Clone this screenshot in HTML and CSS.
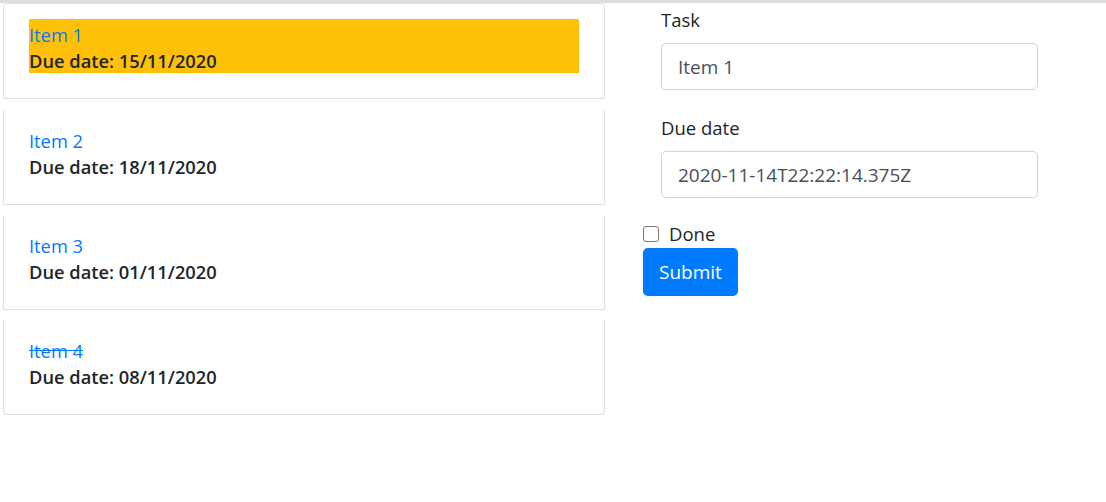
FILE: index.html
```html
<!DOCTYPE html>
<html lang="en">
<head>
<meta charset="utf-8">
<title>Todo</title>
<link rel="stylesheet" href="styles.css">
</head>
<body>
<div class="topbar"></div>
<div class="page">
  <ul class="list">
    <li class="item">
      <div class="item-body selected">
        <div class="title">Item 1</div>
        <div class="due">Due date: 15/11/2020</div>
      </div>
    </li>
    <li class="item">
      <div class="item-body">
        <div class="title">Item 2</div>
        <div class="due">Due date: 18/11/2020</div>
      </div>
    </li>
    <li class="item">
      <div class="item-body">
        <div class="title">Item 3</div>
        <div class="due">Due date: 01/11/2020</div>
      </div>
    </li>
    <li class="item">
      <div class="item-body">
        <div class="title done">Item 4</div>
        <div class="due">Due date: 08/11/2020</div>
      </div>
    </li>
  </ul>
  <form class="form">
    <div class="group">
      <label class="label" for="task">Task</label>
      <input class="field" id="task" type="text" value="Item 1">
    </div>
    <div class="group">
      <label class="label" for="due">Due date</label>
      <input class="field" id="due" type="text" value="2020-11-14T22:22:14.375Z">
    </div>
    <label class="check">
      <input class="checkbox" type="checkbox">
      <span>Done</span>
    </label>
    <button class="btn" type="button">Submit</button>
  </form>
</div>
</body>
</html>
```
FILE: styles.css
```css
html, body {
  margin: 0;
  padding: 0;
  background: #fff;
}
body {
  font-family: "Open Sans", "Noto Sans", sans-serif;
  font-size: 18.5px;
  line-height: 27px;
  color: #212529;
}
.topbar {
  height: 3px;
  background: #dedee2;
}
.page {
  display: flex;
  align-items: flex-start;
  padding-left: 3px;
}
.list {
  list-style: none;
  margin: 0;
  padding: 0;
  width: 602px;
  display: flex;
  flex-direction: column;
}
.item {
  border: 1px solid #dfdfdf;
  padding: 15px 25px 25px;
  margin-bottom: 10px;
  background: #fff;
}
.item + .item {
  border-top: 0;
}
.item:first-child {
  border-radius: 4px 4px 0 0;
  margin-bottom: 11px;
}
.item:last-child {
  border-radius: 0 0 4px 4px;
}
.item-body {
  padding: 1px 0 0;
  font-size: 18.3px;
}
.item-body.selected {
  background: #ffc107;
}
.title {
  color: #007bff;
  line-height: 29px;
}
.title.done {
  text-decoration: line-through;
}
.due {
  font-weight: 600;
  line-height: 24px;
}
.form {
  margin-left: 38px;
  padding-top: 1px;
  display: flex;
  flex-direction: column;
  align-items: flex-start;
}
.group {
  margin-left: 18px;
  margin-bottom: 22px;
  display: flex;
  flex-direction: column;
}
.label {
  padding-top: 2px;
  margin-bottom: 10px;
}
.field {
  box-sizing: border-box;
  width: 377px;
  height: 47px;
  padding: 0 16px;
  border: 1px solid #ced4da;
  border-radius: 4.8px;
  font-family: inherit;
  font-size: 19px;
  color: #495057;
  background: #fff;
}
.check {
  display: flex;
  align-items: center;
  height: 27px;
}
.checkbox {
  appearance: none;
  -webkit-appearance: none;
  box-sizing: border-box;
  width: 16px;
  height: 16px;
  margin: 0 10px 0 0;
  border: 1px solid #767676;
  border-radius: 3px;
  background: #fff;
}
.btn {
  margin-top: 1px;
  height: 48px;
  padding: 0 16px;
  border: 0;
  border-radius: 4.8px;
  background: #007bff;
  color: #fff;
  font-family: inherit;
  font-size: 19px;
}
```
